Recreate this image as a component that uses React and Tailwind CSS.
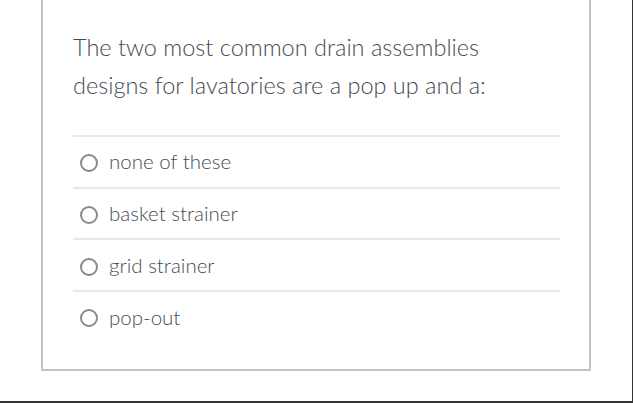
import React, { useState } from "react";

const OPTIONS = ["none of these", "basket strainer", "grid strainer", "pop-out"];

export default function App() {
  const [picked, setPicked] = useState(null);

  return (
    <div
      className="w-[633px] h-[403px] bg-white border-r border-b-2 border-[#333]"
      style={{ fontFamily: "Lato, 'Open Sans', sans-serif" }}
    >
      <div className="ml-[41px] w-[550px] h-[371px] border-x-2 border-b-2 border-[#c4c4c4] pl-[30px] pr-[29px]">
        <p className="pt-[28px] text-[23.5px] font-light leading-[38px] text-[#454c53]">
          The two most common drain assemblies
          <br />
          designs for lavatories are a pop up and a:
        </p>
        <div className="mt-[31px]">
          {OPTIONS.map((opt) => (
            <label
              key={opt}
              className="flex items-center h-[51.7px] border-t-2 border-[#e8e8e8] cursor-pointer"
              onClick={() => setPicked(opt)}
            >
              <span className="ml-[7px] mt-[3px] w-[18px] h-[18px] rounded-full border-2 border-[#8a8a8a] flex items-center justify-center">
                {picked === opt && <span className="w-[7px] h-[7px] rounded-full bg-[#555]" />}
              </span>
              <span className="ml-[11px] text-[20.5px] font-light text-[#454c53]">{opt}</span>
            </label>
          ))}
        </div>
      </div>
    </div>
  );
}
